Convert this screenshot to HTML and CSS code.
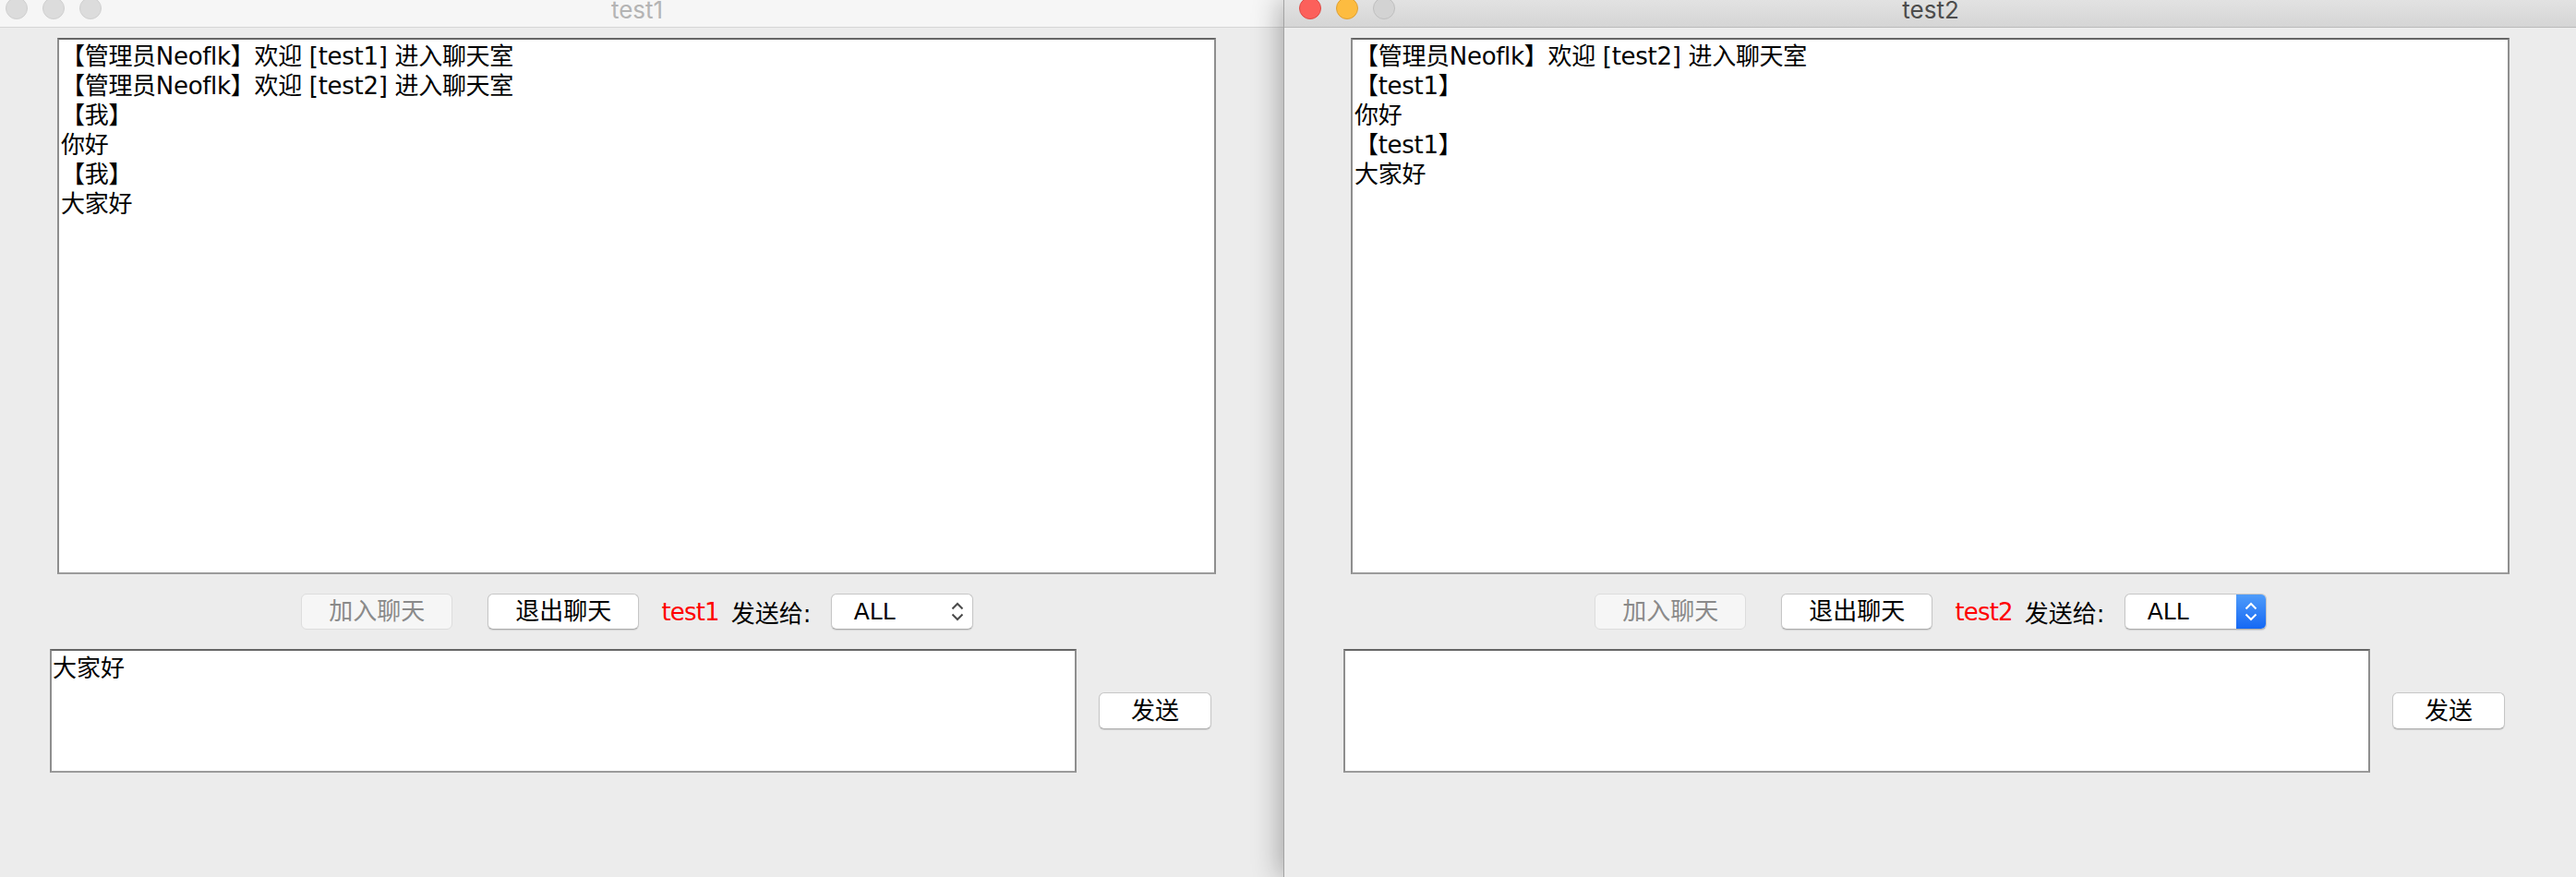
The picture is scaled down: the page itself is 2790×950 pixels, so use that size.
FILE: index.html
```html
<!DOCTYPE html>
<html lang="zh-CN">
<head>
<meta charset="utf-8">
<title>test1 / test2</title>
<link rel="stylesheet" href="styles.css">
</head>
<body>
<div class="desktop">
  <section class="window inactive">
    <header class="titlebar">
      <div class="lights">
        <span class="light"></span><span class="light"></span><span class="light"></span>
      </div>
      <div class="title">test1</div>
      <div></div>
    </header>
    <div class="log">
      <div class="line">【管理员Neoflk】欢迎 [test1] 进入聊天室</div>
      <div class="line">【管理员Neoflk】欢迎 [test2] 进入聊天室</div>
      <div class="line">【我】</div>
      <div class="line">你好</div>
      <div class="line">【我】</div>
      <div class="line">大家好</div>
    </div>
    <div class="controls">
      <button class="btn join" disabled>加入聊天</button>
      <button class="btn quit">退出聊天</button>
      <span class="me">test1</span>
      <span class="label">发送给:</span>
      <div class="select">
        <span class="value">ALL</span>
        <span class="arrows">
          <svg width="14" height="21" viewBox="0 0 14 21"><polyline points="1.5,7.5 7,2 12.5,7.5" /><polyline points="1.5,13.5 7,19 12.5,13.5" /></svg>
        </span>
      </div>
    </div>
    <div class="compose">
      <div class="input"><div class="line">大家好</div></div>
      <button class="btn send">发送</button>
    </div>
  </section>

  <section class="window active">
    <header class="titlebar">
      <div class="lights">
        <span class="light close"></span><span class="light min"></span><span class="light zoom"></span>
      </div>
      <div class="title">test2</div>
      <div></div>
    </header>
    <div class="log">
      <div class="line">【管理员Neoflk】欢迎 [test2] 进入聊天室</div>
      <div class="line">【test1】</div>
      <div class="line">你好</div>
      <div class="line">【test1】</div>
      <div class="line">大家好</div>
    </div>
    <div class="controls">
      <button class="btn join" disabled>加入聊天</button>
      <button class="btn quit">退出聊天</button>
      <span class="me">test2</span>
      <span class="label">发送给:</span>
      <div class="select focused">
        <span class="value">ALL</span>
        <span class="arrows">
          <svg width="14" height="21" viewBox="0 0 14 21"><polyline points="1.5,7.5 7,2 12.5,7.5" /><polyline points="1.5,13.5 7,19 12.5,13.5" /></svg>
        </span>
      </div>
    </div>
    <div class="compose">
      <div class="input"></div>
      <button class="btn send">发送</button>
    </div>
  </section>
</div>
</body>
</html>
```

FILE: styles.css
```css
* { box-sizing: border-box; }

body {
  margin: 0;
  width: 2790px;
  height: 950px;
  overflow: hidden;
  background: #ececec;
  font-family: "DejaVu Sans", "Noto Sans CJK SC", sans-serif;
  color: #000;
}

.desktop {
  display: flex;
  height: 950px;
}

.window {
  flex: 0 0 1401px;
  width: 1401px;
  height: 950px;
  background: #ececec;
  border-left: 1px solid #a3a3a3;
  display: flex;
  flex-direction: column;
}

.window.inactive {
  margin-left: -11px;
}

.window.active {
  position: relative;
  z-index: 1;
  box-shadow: -4px 0 28px rgba(0, 0, 0, 0.3);
}

/* title bar */
.titlebar {
  height: 30px;
  flex: 0 0 30px;
  display: grid;
  grid-template-columns: 1fr auto 1fr;
  align-items: start;
  background: #f6f6f6;
  border-bottom: 1px solid #d6d6d6;
}

.active .titlebar {
  background: linear-gradient(#e2e2e2, #d5d5d5);
  border-bottom: 1px solid #b9b9b9;
}

.lights {
  display: flex;
  gap: 16px;
  padding-left: 16px;
  margin-top: -3px;
}

.light {
  width: 24px;
  height: 24px;
  border-radius: 50%;
  background: #dcdcdc;
  border: 1px solid #d0d0d0;
}

.light.close { background: #fc605b; border-color: #de4b46; }
.light.min { background: #fdbc40; border-color: #dea034; }
.light.zoom { background: #d3d3d3; border-color: #bfbfbf; }

.title {
  font-family: "Inter", "Liberation Sans", sans-serif;
  font-size: 26px;
  line-height: 21px;
  color: #b4b4b4;
}

.active .title {
  color: #4c4c4c;
}

/* message log */
.log {
  margin: 11px 0 0 72px;
  width: 1255px;
  height: 581px;
  flex: 0 0 581px;
  background: #fff;
  border: 2px solid #8e8e8e;
  border-top-color: #666;
  border-bottom-color: #9b9b9b;
  padding: 2px;
  font-size: 26px;
  line-height: 32px;
  letter-spacing: -0.3px;
}

.line {
  white-space: pre;
}

/* controls row */
.controls {
  display: flex;
  justify-content: center;
  align-items: center;
  margin-top: 21px;
  height: 39px;
  flex: 0 0 39px;
}

.btn {
  height: 39px;
  width: 164px;
  padding: 0;
  border-radius: 6px;
  border: 1px solid #c6c6c6;
  border-bottom-color: #adadad;
  background: #fff;
  font-family: "DejaVu Sans", "Noto Sans CJK SC", sans-serif;
  font-size: 26px;
  line-height: 37px;
  color: #000;
  box-shadow: 0 1px 1px rgba(0, 0, 0, 0.12);
}

.btn[disabled] {
  background: #f6f6f6;
  color: #8a8a8a;
  border-color: #dddddd;
  box-shadow: none;
}

.join { margin-right: 38px; }
.quit { margin-right: 24px; }

.me {
  color: #ff0000;
  font-size: 26px;
  letter-spacing: -0.8px;
  margin-right: 13px;
}

.label {
  font-size: 26px;
  margin-right: 21px;
}

.select {
  width: 154px;
  height: 39px;
  display: flex;
  align-items: stretch;
  background: #fff;
  border: 1px solid #c6c6c6;
  border-bottom-color: #adadad;
  border-radius: 6px;
  box-shadow: 0 1px 1px rgba(0, 0, 0, 0.12);
  overflow: hidden;
}

.select .value {
  flex: 1;
  padding-left: 24px;
  font-size: 25px;
  line-height: 37px;
}

.select .arrows {
  width: 32px;
  display: flex;
  align-items: center;
  justify-content: center;
}

.select svg polyline {
  fill: none;
  stroke: #4a4a4a;
  stroke-width: 2;
}

.select.focused .arrows {
  background: linear-gradient(#4f9cfa, #1568f4);
}

.select.focused svg polyline {
  stroke: #fff;
}

/* compose row */
.compose {
  display: flex;
  align-items: center;
  gap: 24px;
  margin-top: 21px;
  padding-left: 64px;
}

.input {
  width: 1112px;
  height: 134px;
  background: #fff;
  border: 2px solid #8e8e8e;
  border-top-color: #666;
  border-bottom-color: #9b9b9b;
  padding: 3px 1px;
  font-size: 26px;
  line-height: 32px;
}

.send {
  width: 122px;
  height: 40px;
}
```
